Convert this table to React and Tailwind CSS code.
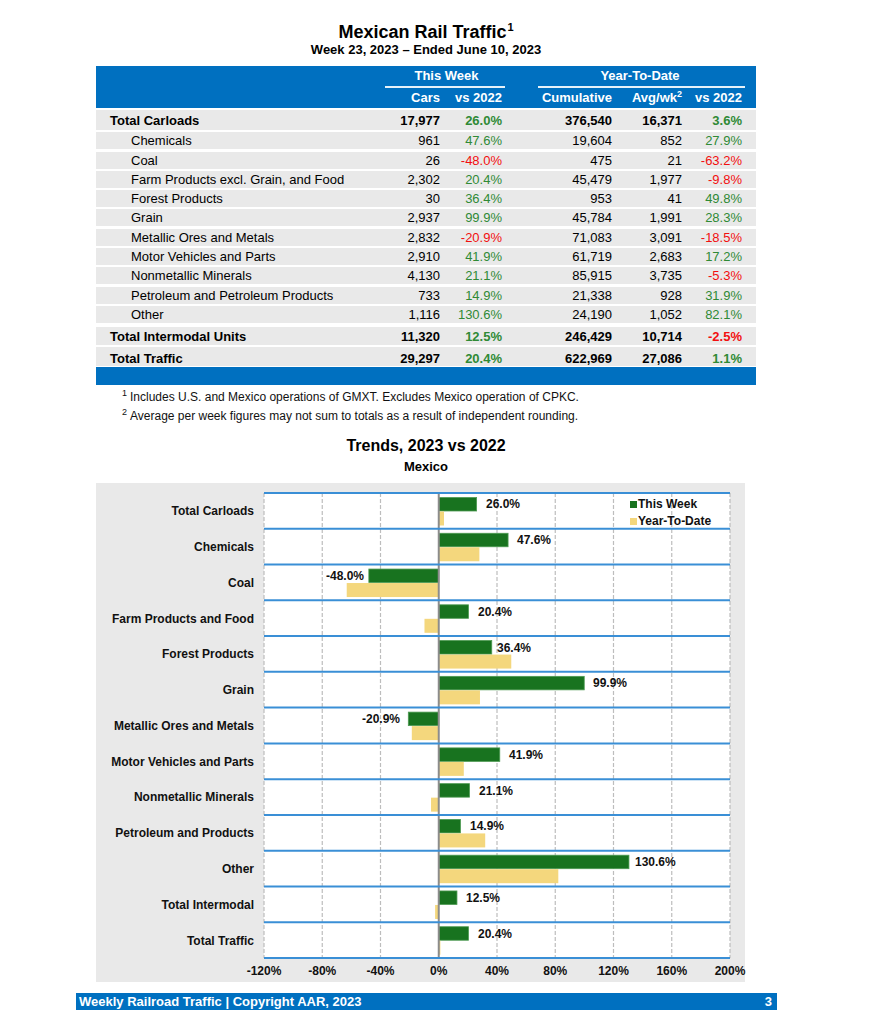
import React from "react";

const sub = [
  ["Chemicals", "961", "47.6%", "19,604", "852", "27.9%"],
  ["Coal", "26", "-48.0%", "475", "21", "-63.2%"],
  ["Farm Products excl. Grain, and Food", "2,302", "20.4%", "45,479", "1,977", "-9.8%"],
  ["Forest Products", "30", "36.4%", "953", "41", "49.8%"],
  ["Grain", "2,937", "99.9%", "45,784", "1,991", "28.3%"],
  ["Metallic Ores and Metals", "2,832", "-20.9%", "71,083", "3,091", "-18.5%"],
  ["Motor Vehicles and Parts", "2,910", "41.9%", "61,719", "2,683", "17.2%"],
  ["Nonmetallic Minerals", "4,130", "21.1%", "85,915", "3,735", "-5.3%"],
  ["Petroleum and Petroleum Products", "733", "14.9%", "21,338", "928", "31.9%"],
  ["Other", "1,116", "130.6%", "24,190", "1,052", "82.1%"],
];

const chart = [
  ["Total Carloads", 26.0, 3.6, 222],
  ["Chemicals", 47.6, 27.9, 253],
  ["Coal", -48.0, -63.2, 100],
  ["Farm Products and Food", 20.4, -9.8, 214],
  ["Forest Products", 36.4, 49.8, 233],
  ["Grain", 99.9, 28.3, 329],
  ["Metallic Ores and Metals", -20.9, -18.5, 136],
  ["Motor Vehicles and Parts", 41.9, 17.2, 245],
  ["Nonmetallic Minerals", 21.1, -5.3, 215],
  ["Petroleum and Products", 14.9, 31.9, 206],
  ["Other", 130.6, 82.1, 371],
  ["Total Intermodal", 12.5, -2.5, 202],
  ["Total Traffic", 20.4, 1.1, 214],
];

const PW = 466;
const PH = 465;
const BAND = PH / 13;
const STEP = PW / 8;
const ZERO = STEP * 3;
const sx = (v) => (v / 40) * STEP;

function Pct({ v, bold }) {
  const neg = v.startsWith("-");
  return (
    <div className={`text-right ${neg ? "text-[#f20f0f]" : "text-[#2f8a35]"} ${bold ? "font-bold" : ""}`}>{v}</div>
  );
}

function Row({ r, total, h, mt, pt }) {
  return (
    <div className={`grid grid-cols-[289px_55px_62px_36px_74px_70px_60px_14px] items-center bg-[#e9e9e9] ${h} ${mt} ${pt} ${total ? "font-bold" : ""}`}>
      <div className={total ? "pl-[14px]" : "pl-[35px]"}>{r[0]}</div>
      <div className="text-right">{r[1]}</div>
      <Pct v={r[2]} bold={total} />
      <div />
      <div className="text-right">{r[3]}</div>
      <div className="text-right">{r[4]}</div>
      <Pct v={r[5]} bold={total} />
      <div />
    </div>
  );
}

export default function App() {
  return (
    <div className="w-[888px] h-[1024px] bg-white text-black font-['Liberation_Sans',Arial,sans-serif] overflow-hidden">
      <div className="ml-[96px] w-[660px]">
        <div className="pt-[22px] h-[42px] text-center text-[18px] leading-[20px] font-bold">
          Mexican Rail Traffic<sup className="text-[11px] -top-[7px] ml-[1px]">1</sup>
        </div>
        <div className="text-center text-[13px] leading-[16px] font-bold">Week 23, 2023 – Ended June 10, 2023</div>

        <div className="mt-[8px] text-[13px] leading-[16px]">
          <div className="h-[42px] bg-[#0070c0] text-white font-bold grid grid-cols-[289px_55px_62px_36px_74px_70px_60px_14px] grid-rows-[22px_20px]">
            <div className="row-span-2" />
            <div className="col-span-2 flex flex-col items-center justify-end">
              <div className="pb-[2px] pl-[6px]">This Week</div>
              <div className="h-[2px] w-[120px] ml-[3px] bg-white/90" />
            </div>
            <div />
            <div className="col-span-3 flex flex-col items-center justify-end">
              <div className="pb-[2px]">Year-To-Date</div>
              <div className="h-[2px] w-[207px] ml-[3px] bg-white/90" />
            </div>
            <div className="row-span-2" />
            <div className="text-right self-center">Cars</div>
            <div className="text-right self-center">vs 2022</div>
            <div />
            <div className="text-right self-center">Cumulative</div>
            <div className="text-right self-center">
              Avg/wk<sup className="text-[9px] -top-[5px]">2</sup>
            </div>
            <div className="text-right self-center">vs 2022</div>
          </div>
          <Row r={["Total Carloads", "17,977", "26.0%", "376,540", "16,371", "3.6%"]} total h="h-[20px]" mt="mt-[2px]" pt="pt-[2px]" />
          {sub.map((r) => (
            <Row key={r[0]} r={r} h="h-[17px]" mt="mt-[2.3px]" pt="pt-[1px]" />
          ))}
          <Row r={["Total Intermodal Units", "11,320", "12.5%", "246,429", "10,714", "-2.5%"]} total h="h-[18px]" mt="mt-[4px]" pt="pt-[2px]" />
          <Row r={["Total Traffic", "29,297", "20.4%", "622,969", "27,086", "1.1%"]} total h="h-[19px]" mt="mt-[2px]" pt="pt-[4px]" />
          <div className="h-[18px] mt-[1px] bg-[#0070c0]" />
        </div>

        <div className="mt-[3px] pl-[26px] text-[12px] leading-[19px] text-[#111]">
          <div>
            <sup className="text-[9px] mr-[3px]">1</sup>Includes U.S. and Mexico operations of GMXT. Excludes Mexico operation of CPKC.
          </div>
          <div>
            <sup className="text-[9px] mr-[3px]">2</sup>Average per week figures may not sum to totals as a result of independent rounding.
          </div>
        </div>

        <div className="mt-[10px] text-center text-[16px] leading-[20px] font-bold">Trends, 2023 vs 2022</div>
        <div className="mt-[3px] text-center text-[13px] leading-[16px] font-bold">Mexico</div>
      </div>

      <div className="ml-[96px] mt-[8px] w-[649px] h-[499px] bg-[#e9e9e9] flex">
        <div className="w-[168px] pt-[10px] pr-[10px] flex flex-col">
          {chart.map((c) => (
            <div key={c[0]} className="h-[35.77px] pt-[1px] flex items-center justify-end text-[12px] font-bold text-[#111]">
              {c[0]}
            </div>
          ))}
        </div>
        <div className="pt-[10px]">
          <div className="relative w-[466px] h-[465px] bg-white">
            <svg width={PW} height={PH} className="absolute left-0 top-0 overflow-visible">
              {Array.from({ length: 9 }).map((_, k) =>
                k === 3 ? null : (
                  <line key={k} x1={k * STEP} x2={k * STEP} y1={0} y2={PH} stroke="#bdbdbd" strokeWidth="1.2" strokeDasharray="4 2" />
                )
              )}
              {chart.map((c, i) => {
                const top = i * BAND;
                const gw = sx(c[1]);
                const yw = sx(c[2]);
                return (
                  <g key={c[0]}>
                    <rect x={gw >= 0 ? ZERO : ZERO + gw} y={top + 4.5} width={Math.abs(gw)} height={13.5} fill="#18731f" stroke="#4d9a52" strokeWidth="0.8" />
                    <rect x={yw >= 0 ? ZERO : ZERO + yw} y={top + 18.5} width={Math.abs(yw)} height={14} fill="#f4d77d" />
                  </g>
                );
              })}
              <line x1={ZERO} x2={ZERO} y1={0} y2={PH} stroke="#8c8c8c" strokeWidth="2" />
              {Array.from({ length: 14 }).map((_, i) => (
                <line key={i} x1={0} x2={PW} y1={i * BAND} y2={i * BAND} stroke="#3a8fd6" strokeWidth="2" />
              ))}
            </svg>
            {chart.map((c, i) => {
              const neg = c[1] < 0;
              const label = `${c[1].toFixed(1)}%`;
              return (
                <div
                  key={c[0]}
                  className="absolute text-[12px] leading-[14px] font-bold text-[#111] whitespace-nowrap"
                  style={neg ? { right: PW - c[3], top: i * BAND + 4.5 } : { left: c[3], top: i * BAND + 4.5 }}
                >
                  {label}
                </div>
              );
            })}
            <div className="absolute left-[366px] top-[3px] text-[12px] leading-[17px] font-bold text-[#111]">
              <div className="flex items-center">
                <span className="w-[7px] h-[7px] bg-[#18731f] mr-[1px]" />This Week
              </div>
              <div className="flex items-center">
                <span className="w-[7px] h-[7px] bg-[#f4d77d] mr-[1px]" />Year-To-Date
              </div>
            </div>
          </div>
          <div className="relative w-[466px] h-[14px] mt-[6px]">
            {["-120%", "-80%", "-40%", "0%", "40%", "80%", "120%", "160%", "200%"].map((t, k) => (
              <div
                key={t}
                className="absolute top-0 -translate-x-1/2 text-[12px] leading-[14px] font-bold text-[#111]"
                style={{ left: k * STEP }}
              >
                {t}
              </div>
            ))}
          </div>
        </div>
      </div>

      <div className="ml-[76px] mt-[11px] w-[701px] h-[17px] bg-[#0070c0] text-white font-bold text-[13px] leading-[17px] flex justify-between pl-[3px] pr-[5px]">
        <span>Weekly Railroad Traffic | Copyright AAR, 2023</span>
        <span>3</span>
      </div>
    </div>
  );
}
